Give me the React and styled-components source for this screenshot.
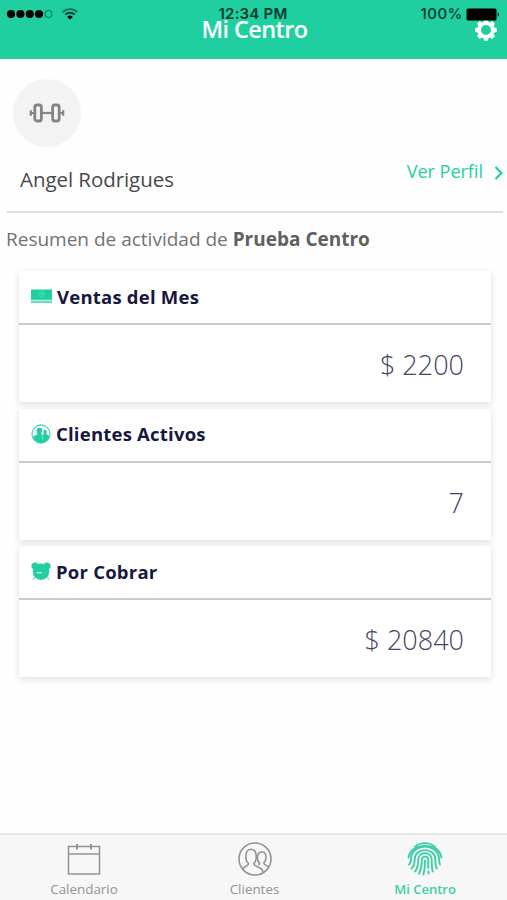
import React from "react"
import styled, { createGlobalStyle, css } from "styled-components"

const green = "#1fcfa0"
const navy = "#17173f"

const GlobalStyle = createGlobalStyle`
  * {
    box-sizing: border-box;
  }
  body {
    margin: 0;
    background: #fefefe;
    font-family: "Open Sans", "Noto Sans", sans-serif;
  }
  svg {
    display: block;
    flex: none;
  }
`

const Screen = styled.div`
  width: 507px;
  height: 900px;
  display: flex;
  flex-direction: column;
  overflow: hidden;
`

const Header = styled.header`
  position: relative;
  height: 59px;
  flex: none;
  display: grid;
  grid-template-columns: 1fr auto 1fr;
  align-items: start;
  padding: 13px 9px 0 11px;
  background: ${green};
`

const Title = styled.h1`
  grid-column: 2;
  margin: 0;
  font-size: 23.5px;
  line-height: 32px;
  font-weight: 600;
  letter-spacing: -0.6px;
  color: #fff;
`

const SettingsButton = styled.button`
  justify-self: end;
  margin-top: 5px;
  padding: 0;
  border: 0;
  background: none;
  color: #fff;
`

// Lies over the header, as the system bar does on the phone
const StatusBar = styled.div`
  position: absolute;
  top: 5px;
  left: 6px;
  right: 7px;
  height: 18px;
  display: grid;
  grid-template-columns: 1fr auto 1fr;
  align-items: center;
  font-family: Inter, "Liberation Sans", sans-serif;
  font-size: 15px;
  line-height: 18px;
  color: #07392c;
`

const Signal = styled.div`
  display: flex;
  align-items: center;
  gap: 8px;
`

const Time = styled.span`
  font-weight: 600;
  font-size: 15px;
  letter-spacing: 0.2px;
`

const Battery = styled.div`
  display: flex;
  align-items: center;
  justify-content: flex-end;
  gap: 3px;
  font-weight: 500;
  letter-spacing: 0.5px;
`

const Main = styled.main`
  flex: 1;
  display: flex;
  flex-direction: column;
`

const Profile = styled.section`
  height: 154px;
  margin: 0 4px 0 7px;
  padding: 20px 0 0 6px;
  border-bottom: 2px solid #dedede;
`

const Avatar = styled.div`
  width: 68px;
  height: 68px;
  display: flex;
  align-items: center;
  justify-content: center;
  border-radius: 50%;
  background: #f3f3f3;
`

const ProfileRow = styled.div`
  display: flex;
  justify-content: space-between;
  align-items: flex-start;
  padding: 9px 0 0 7px;
`

const Name = styled.span`
  margin-top: 8px;
  font-size: 20.5px;
  line-height: 30px;
  letter-spacing: -0.06px;
  color: #484848;
`

const ProfileLink = styled.a`
  display: flex;
  align-items: center;
  gap: 11px;
  font-size: 18px;
  line-height: 30px;
  color: ${green};

  svg {
    margin-top: 4px;
  }
`

const Summary = styled.p`
  margin: 11px 0 0 6px;
  font-size: 19px;
  line-height: 30px;
  color: #727272;

  b {
    font-weight: 700;
    color: #606060;
  }
`

const Cards = styled.div`
  display: flex;
  flex-direction: column;
  gap: 6.5px;
  padding: 17px 16px 0 19px;
`

const Card = styled.article`
  height: 131px;
  background: #fff;
  box-shadow: 0 2px 7px rgba(0, 0, 0, 0.13);
`

const CardTitle = styled.h2`
  height: 54px;
  margin: 0;
  padding: 0 13px 2px 12px;
  display: flex;
  align-items: center;
  gap: 5px;
  border-bottom: 2px solid #cbcbcb;
  font-size: 18.5px;
  font-weight: 700;
  letter-spacing: 0.22px;
  color: ${navy};
`

const CardValue = styled.div`
  padding: 21px 27px 0;
  text-align: right;
  font-size: 27px;
  line-height: 38px;
  font-weight: 300;
  color: #45455f;
`

const TabBar = styled.nav`
  height: 67px;
  flex: none;
  display: grid;
  grid-template-columns: 84px 1fr 84px;
  justify-content: space-between;
  padding: 0 40px 0 42px;
  border-top: 2px solid #e6e6e6;
  background: #f7f7f7;
`

const Tab = styled.a`
  display: flex;
  flex-direction: column;
  align-items: center;
  padding-top: 7px;
  color: #939393;
  font-size: 13.4px;
  line-height: 18px;
  white-space: nowrap;
  ${props =>
    props.$active &&
    css`
      color: #3ad0a6;
      font-size: 13px;
      font-weight: 600;
    `}

  svg {
    margin-bottom: 4px;
  }
`

function SignalIcon() {
  return (
    <svg width="48" height="10" viewBox="0 0 48 10">
      {[5, 14.4, 23.8, 33].map(x => (
        <circle key={x} cx={x} cy="5" r="4.1" fill="#000" />
      ))}
      <circle cx="42.5" cy="5" r="3.6" fill="none" stroke="#0b6e53" />
    </svg>
  )
}

function WifiIcon() {
  return (
    <svg width="16" height="12" viewBox="0 0 16 12" fill="none">
      <path d="M.8 4.2a10.2 10.2 0 0 1 14.4 0" stroke="#0c7659" strokeWidth="1.7" />
      <path d="M3.3 6.7a6.6 6.6 0 0 1 9.4 0" stroke="#06382b" strokeWidth="1.9" />
      <path d="M8 11.6 5.2 8.9a4 4 0 0 1 5.6 0z" fill="#000" />
    </svg>
  )
}

function BatteryIcon() {
  return (
    <svg width="34" height="13" viewBox="0 0 34 13">
      <rect x=".5" y=".5" width="30" height="12" rx="1.5" fill="#000" />
      <path d="M31.5 4.5c2 .3 2 3.7 0 4z" fill="#06382b" />
    </svg>
  )
}

function GearIcon() {
  return (
    <svg width="24" height="24" viewBox="-12 -12 24 24">
      {[0, 45, 90, 135, 180, 225, 270, 315].map(a => (
        <path key={a} d="M-2.700-7-2-10.800h4L2.700-7z" fill="currentColor" transform={`rotate(${a})`} />
      ))}
      <circle r="6.8" fill="none" stroke="currentColor" strokeWidth="3.6" />
    </svg>
  )
}

function DumbbellIcon() {
  return (
    <svg width="36" height="20" viewBox="0 0 36 20" fill="none" stroke="#858585" strokeWidth="2.8">
      <rect x="5.8" y="2" width="6.6" height="16" rx="2.2" />
      <rect x="23.6" y="2" width="6.6" height="16" rx="2.2" />
      <path d="M12.500 10h11" strokeWidth="2.2" />
      <path d="M1.800 7.200v5.600M34.200 7.200v5.600M2 10h3M31 10h3" strokeWidth="2.2" />
    </svg>
  )
}

function MoneyIcon() {
  return (
    <svg width="21" height="15" viewBox="0 0 21 15">
      <path d="M0 .5h21v10.300H0z" fill={green} />
      <path d="M0 11.500h21V14H0z" fill="#65dfbf" />
      <circle cx="10.500" cy="5" r="2.600" fill="none" stroke="#76e8cd" strokeWidth=".9" strokeDasharray="1.500 1" />
      <path d="M10.500 4v2" stroke="#76e8cd" />
    </svg>
  )
}

function ActiveClientsIcon() {
  return (
    <svg width="20" height="20" viewBox="0 0 20 20">
      <circle cx="10" cy="10" r="9" fill="none" stroke="#4cd9b2" strokeWidth="1.300" />
      <path
        d="M8.500 3.800c2 0 2.800 1.300 2.600 3.200-.1 1.100-.5 1.700-.8 2.200l.2 1 1.500.6 1-.5c-1.200-2.600-.7-4.500 1-4.500s2.200 2 1.200 4.400l2.100 1 1 1.500c-1.300 4-4.600 6.200-8.300 6.200-3.500 0-6-1.800-7.300-4.700l-.2-2.200 3.900-1.500v-1C5 6.500 5.500 3.800 8.500 3.800z"
        fill={green}
      />
      <path d="M11 10.500l1 5M3.500 8.500l2 .8" stroke="#a4eed9" strokeWidth=".8" />
    </svg>
  )
}

function AlarmIcon() {
  return (
    <svg width="20" height="19" viewBox="0 0 20 19">
      <path d="M1 6.500C-1.200 2 3-.9 7 1.300L3 7zM19 6.500C21.200 2 17-.9 13 1.300L17 7z" fill={green} />
      <circle cx="10" cy="9.700" r="8.200" fill={green} />
      <path d="M4 15 2 17.500M16 15l2 2.500" stroke="#7be4c9" strokeWidth="1.300" />
      <path d="M5.500 10.700h5" stroke="#d4f7ed" strokeWidth="1.300" />
    </svg>
  )
}

function CalendarIcon() {
  return (
    <svg width="34" height="34" viewBox="0 0 34 34" fill="none" stroke="currentColor" strokeWidth="1.500">
      <path d="M1.500 4.500h31v27.500h-31zM1.500 12h31" />
      <path d="M10 2v5.500M24 2v5.500" strokeWidth="2" />
    </svg>
  )
}

function ClientsIcon() {
  return (
    <svg width="34" height="34" viewBox="0 0 34 34" fill="none" stroke="currentColor" strokeWidth="1.600">
      <circle cx="17" cy="17" r="16" />
      <path d="M4.500 27c1.200-2.800 6.300-2.700 6-5.700-1.500-1-2.600-3-2.600-5.300-.2-6 1.200-8.700 5.100-8.700s5.400 3 5.200 8.700c-.1 2.300-1 4.300-2.400 5.300-.4 3.300 6 3 8.200 6.200.7 1 .9 2 .9 3.200" />
      <path d="M20.300 22.800c1-.3 1.300-.9 1.200-2-1.600-1.400-2.500-3.500-2-6 .5-3.200 1.800-4.800 4.300-4.800 2.800 0 4.200 2 4.200 5 0 2.600-.8 4.700-2.200 5.900-.2 2.300 3 2.200 4.700 4" />
    </svg>
  )
}

function FingerprintIcon() {
  return (
    <svg width="36" height="34" viewBox="0 0 36 34" fill="none" stroke="currentColor" strokeWidth="1.900" strokeLinecap="round">
      <path d="M8 4.800C14-.1 22-.1 28 4.800" />
      <path d="M1.500 15.500C4 .5 32-.5 34.500 15.500" />
      <path d="M2 22.500c1.700-1.500 2-3.500 2-6 1-16 27-16 28 0 0 2.500.2 4 1 6" />
      <path d="M4.500 26.500c2.600-2.500 3.200-5.500 3.200-9 0-12.500 20.600-12.500 20.600 0 0 3.800.2 6.500 1.500 9" />
      <path d="M8 29.500c2.700-3.500 3.300-7.700 3.300-12 0-8.300 13.400-8.300 13.400 0 0 5 .1 8.800 1 12" />
      <path d="M12 31.700c2.200-4.200 2.800-9.200 2.800-13.900 0-4.200 6.400-4.200 6.400 0V26M21.400 29.500l.3 2" />
      <path d="M18 18.500c0 5-.3 9.500-1.500 14" />
    </svg>
  )
}

const stats = [
  { title: "Ventas del Mes", value: "$ 2200", icon: <MoneyIcon /> },
  { title: "Clientes Activos", value: "7", icon: <ActiveClientsIcon /> },
  { title: "Por Cobrar", value: "$ 20840", icon: <AlarmIcon /> },
]

export default function App() {
  return (
    <>
      <GlobalStyle />
      <Screen>
        <Header>
          <Title>Mi Centro</Title>
          <SettingsButton aria-label="Ajustes">
            <GearIcon />
          </SettingsButton>
          <StatusBar>
            <Signal>
              <SignalIcon />
              <WifiIcon />
            </Signal>
            <Time>12:34 PM</Time>
            <Battery>
              100%
              <BatteryIcon />
            </Battery>
          </StatusBar>
        </Header>
        <Main>
          <Profile>
            <Avatar>
              <DumbbellIcon />
            </Avatar>
            <ProfileRow>
              <Name>Angel Rodrigues</Name>
              <ProfileLink>
                Ver Perfil
                <svg width="9" height="14" viewBox="0 0 9 14" fill="none">
                  <path d="M1.500 1l6 6-6 6" stroke={green} strokeWidth="2.200" />
                </svg>
              </ProfileLink>
            </ProfileRow>
          </Profile>
          <Summary>
            Resumen de actividad de <b>Prueba Centro</b>
          </Summary>
          <Cards>
            {stats.map(stat => (
              <Card key={stat.title}>
                <CardTitle>
                  {stat.icon}
                  {stat.title}
                </CardTitle>
                <CardValue>{stat.value}</CardValue>
              </Card>
            ))}
          </Cards>
        </Main>
        <TabBar>
          <Tab>
            <CalendarIcon />
            Calendario
          </Tab>
          <Tab>
            <ClientsIcon />
            Clientes
          </Tab>
          <Tab $active>
            <FingerprintIcon />
            Mi Centro
          </Tab>
        </TabBar>
      </Screen>
    </>
  )
}
